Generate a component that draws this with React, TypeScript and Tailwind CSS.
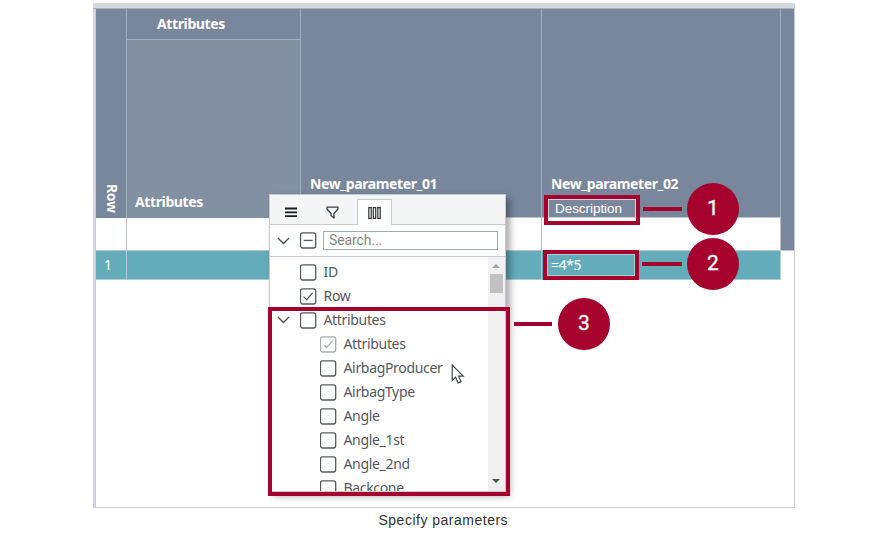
import type { ReactNode } from "react";

type BoxState = "empty" | "checked" | "muted" | "mixed";

function CheckBox({ state = "empty" }: { state?: BoxState }) {
  const color = state === "muted" ? "#a9adb2" : "#54585d";
  return (
    <svg width="17" height="17" viewBox="0 0 17 17" fill="none" stroke={color} className="shrink-0">
      <rect x="0.5" y="0.8" width="15.2" height="15.2" rx="2.2" strokeWidth="1.3" />
      {(state === "checked" || state === "muted") && <path d="M3.5 8.6 6.7 11.6l6-7" strokeWidth="1.3" />}
      {state === "mixed" && <path d="M3.7 8.4h9" strokeWidth="1.3" />}
    </svg>
  );
}

function Chevron() {
  return (
    <svg width="13" height="8" viewBox="0 0 13 8" fill="none" stroke="#4a4e54" strokeWidth="1.4" className="shrink-0">
      <path d="M1 1l5.5 5.5L12 1" />
    </svg>
  );
}

function TreeRow({ label, state, level = 0, open = false }: { label: string; state?: BoxState; level?: number; open?: boolean }) {
  return (
    <div className={`flex h-6 shrink-0 items-center ${level ? "pl-[50px]" : "pl-[7px]"}`}>
      {!level && <div className="flex w-[23px] shrink-0">{open && <Chevron />}</div>}
      <CheckBox state={state} />
      <span className="ml-[7px] whitespace-nowrap text-[14px] leading-6 tracking-[-0.33px] text-[#54585d]">{label}</span>
    </div>
  );
}

function HeadCell({ className = "", children }: { className?: string; children?: ReactNode }) {
  return <div className={`border-r border-[#a3b0c0] ${className}`}>{children}</div>;
}

const columns = "grid grid-cols-[31px_174px_241px_239px_13px]";

const attributes: { label: string; state?: BoxState }[] = [
  { label: "Attributes", state: "muted" },
  { label: "AirbagProducer" },
  { label: "AirbagType" },
  { label: "Angle" },
  { label: "Angle_1st" },
  { label: "Angle_2nd" },
  { label: "Backcone" },
];

function ColumnMenu() {
  return (
    <div className="absolute left-[268.5px] top-[194px] flex h-[298px] w-[237px] flex-col border border-[#c5cbd0] bg-white shadow-[4px_4px_7px_rgba(0,0,0,0.35)]">
      <div className="flex h-[30px] shrink-0 bg-[#f4f6f5]">
        <div className="flex w-[43px] items-center justify-center border-b border-[#c5cbd0] pr-px pt-[6px]">
          <svg width="12" height="11" viewBox="0 0 12 11" stroke="#17191c" strokeWidth="1.8">
            <path d="M0 1.5h12M0 5.3h12M0 9.1h12" />
          </svg>
        </div>
        <div className="flex w-[44px] items-center border-b border-[#c5cbd0] pl-[13px] pt-[5px]">
          <svg width="13" height="13" viewBox="0 0 13 13" fill="none" stroke="#393d42" strokeWidth="1.3" strokeLinejoin="round">
            <path d="M1 1.2h11V3L8 7.5V12L5 9.5V7.5L1 3z" />
          </svg>
        </div>
        <div className="mt-[4px] flex w-[35px] items-center justify-center border-x border-t border-[#c5cbd0] bg-white">
          <svg width="13" height="12" viewBox="0 0 13 12" fill="none" stroke="#303338" strokeWidth="1.2">
            <path d="M.8.7h2.4v10.6H.8zM5.3.7h2.4v10.6H5.3zM9.8.7h2.4v10.6H9.8z" />
          </svg>
        </div>
        <div className="flex-1 border-b border-[#c5cbd0]" />
      </div>
      <div className="flex h-8 shrink-0 items-center border-b border-[#c5cbd0] pl-[7px]">
        <div className="flex w-[23px]">
          <Chevron />
        </div>
        <CheckBox state="mixed" />
        <div className="ml-[6.5px] flex h-[19px] w-[175px] items-center border border-[#9caeb5] pl-[5px] font-['Roboto',sans-serif] text-[14px] tracking-[-0.1px] text-[#858585]">
          Search...
        </div>
      </div>
      <div className="flex min-h-0 flex-1">
        <div className="flex flex-1 flex-col overflow-hidden pt-[3px]">
          <TreeRow label="ID" />
          <TreeRow label="Row" state="checked" />
          <TreeRow label="Attributes" open />
          {attributes.map((a) => (
            <TreeRow key={a.label} label={a.label} state={a.state} level={1} />
          ))}
        </div>
        <div className="flex w-[17px] flex-col items-center bg-[#f0f0f0]">
          <svg width="8" height="4" viewBox="0 0 8 4" fill="#a0a0a0" className="mt-[7px]">
            <path d="M0 4l4-4 4 4z" />
          </svg>
          <div className="mt-[6px] h-[19px] w-[13px] bg-[#c1c1c1]" />
          <svg width="8" height="4" viewBox="0 0 8 4" fill="#505050" className="mb-[8px] mt-auto">
            <path d="M0 0l4 4 4-4z" />
          </svg>
        </div>
      </div>
    </div>
  );
}

function Marker({ n, className }: { n: number; className: string }) {
  return (
    <div className={`absolute flex size-[52px] items-center justify-center rounded-full bg-[#a5032d] pb-px font-['Roboto',sans-serif] text-[21px] font-normal leading-none text-white [-webkit-text-stroke:0.3px_white] ${className}`}>
      {n}
    </div>
  );
}

export default function App() {
  return (
    <main className="relative h-[534px] w-[887px] overflow-hidden bg-white pl-[93px] pt-[3px] font-['Noto_Sans',sans-serif]">
      <section className="h-[505px] w-[702px] border-b border-r border-[#cdcdcd]">
        <div className="h-[6px] border-b border-[#a7b1bc] bg-[#d5d9de]" />
        <div className="flex h-[498px]">
          <div className="w-[3px] shrink-0 border-r border-[#c3cbd7] bg-[#d2d6d9]" />
          <div className="text-[14px] font-bold tracking-[-0.38px] text-white">
            <div className={`${columns} h-[209px] bg-[#78879c]`}>
              <HeadCell className="flex items-end justify-center pb-[6px] pl-[2px]">
                <span className="text-[14px] leading-4 [writing-mode:vertical-rl]">Row</span>
              </HeadCell>
              <HeadCell className="flex flex-col">
                <div className="h-[31px] border-b border-[#a3b0c0] pl-[30px] leading-[30px]">Attributes</div>
                <div className="flex flex-1 items-end bg-[#8290a2] pb-[4px] pl-2 leading-6">Attributes</div>
              </HeadCell>
              <HeadCell className="flex items-end border-b border-b-[#b9c4d0] pb-[21px] pl-[9px] leading-6">New_parameter_01</HeadCell>
              <HeadCell className="flex flex-col justify-end border-b border-b-[#b9c4d0] pl-[9px]">
                <span className="leading-6">New_parameter_02</span>
                <span className="h-[21px] pl-[4px] pt-[3px] font-['Liberation_Sans',sans-serif] text-[13.5px] font-normal leading-[20px] tracking-[-0.05px]">Description</span>
              </HeadCell>
              <div />
            </div>
            <div className={`${columns} h-[33px] border-b border-[#bcc3ce] bg-white`}>
              <div className="border-r border-[#bcc3ce]" />
              <div className="border-r border-[#bcc3ce]" />
              <div className="border-r border-[#bcc3ce]" />
              <div className="border-r border-[#bcc3ce]" />
              <div className="bg-[#78879c]" />
            </div>
            <div className={`${columns} h-[28px] font-normal leading-[28px]`}>
              <div className="border-b border-r border-[#b5c8d3] bg-[#64acba] pl-2">1</div>
              <div className="border-b border-r border-[#b5c8d3] bg-[#64acba]" />
              <div className="border-b border-r border-[#b5c8d3] bg-[#64acba]" />
              <div className="border-b border-r border-[#b5c8d3] bg-[#64acba] pl-[9px]">=4*5</div>
              <div />
            </div>
          </div>
        </div>
      </section>
      <p className="ml-[285.5px] mt-[4px] whitespace-nowrap font-['Liberation_Sans',sans-serif] text-[14px] leading-4 tracking-[0.5px] text-[#333]">Specify parameters</p>

      <ColumnMenu />

      <div className="absolute left-[268px] top-[307px] h-[189px] w-[242px] border-4 border-[#a5032d]" />
      <div className="absolute left-[544px] top-[195px] h-[30px] w-[96px] border-4 border-[#a5032d]">
        <div className="h-[19px] border border-[#ccd4df]" />
        <div className="h-[3px] bg-white" />
      </div>
      <div className="absolute left-[543px] top-[250px] h-[30px] w-[96px] border-4 border-[#a5032d]">
        <div className="h-full border border-[#a4d1d9]" />
      </div>
      <div className="absolute left-[643px] top-[207px] h-1 w-[39px] bg-[#a5032d]" />
      <div className="absolute left-[642px] top-[262px] h-1 w-[40px] bg-[#a5032d]" />
      <div className="absolute left-[514px] top-[322px] h-1 w-[38px] bg-[#a5032d]" />
      <Marker n={1} className="left-[687px] top-[183px]" />
      <Marker n={2} className="left-[687px] top-[238px]" />
      <Marker n={3} className="left-[558px] top-[298px]" />

      <svg width="14" height="20" viewBox="0 0 14 20" className="absolute left-[451px] top-[364px]">
        <path d="M1.2 1v15.5l3.4-3.2 2.5 5.6 3-1.3-2.5-5.4h4.6z" fill="#fff" stroke="#44484e" strokeWidth="1.2" />
      </svg>
    </main>
  );
}
